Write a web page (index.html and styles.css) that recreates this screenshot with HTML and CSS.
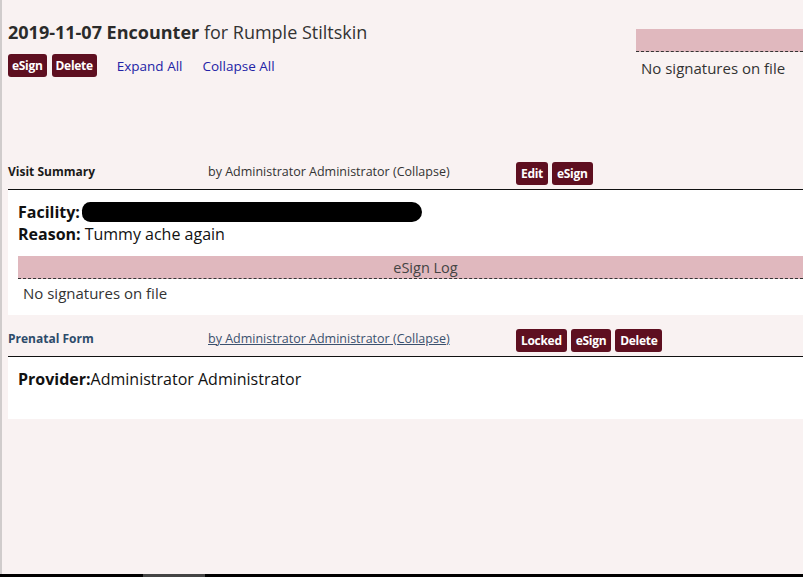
FILE: index.html
```html
<!DOCTYPE html>
<html lang="en">
<head>
  <meta charset="UTF-8">
  <title>Encounter</title>
  <link rel="stylesheet" href="styles.css">
</head>
<body>
  <div class="page">
    <header class="top">
      <div class="top-left">
        <h1><b>2019-11-07 Encounter</b> for Rumple Stiltskin</h1>
        <div class="actions">
          <a class="btn" href="#">eSign</a>
          <a class="btn" href="#">Delete</a>
          <a class="link" href="#">Expand All</a>
          <a class="link" href="#">Collapse All</a>
        </div>
      </div>
      <div class="top-log">
        <div class="log-bar"></div>
        <div class="log-empty">No signatures on file</div>
      </div>
    </header>

    <!-- visit summary -->
    <section class="form">
      <div class="form-head">
        <span class="form-title">Visit Summary</span>
        <span class="form-by">by Administrator Administrator (Collapse)</span>
        <span class="form-btns">
          <a class="btn" href="#">Edit</a>
          <a class="btn" href="#">eSign</a>
        </span>
      </div>
      <div class="form-body tall">
        <div class="field"><b>Facility:</b><span class="redact"></span></div>
        <div class="field"><b>Reason:</b> Tummy ache again</div>
        <div class="log">
          <div class="log-bar">eSign Log</div>
          <div class="log-empty small">No signatures on file</div>
        </div>
      </div>
    </section>

    <!-- prenatal form -->
    <section class="form">
      <div class="form-head">
        <span class="form-title blue">Prenatal Form</span>
        <a class="form-by under" href="#">by Administrator Administrator (Collapse)</a>
        <span class="form-btns">
          <a class="btn" href="#">Locked</a>
          <a class="btn" href="#">eSign</a>
          <a class="btn" href="#">Delete</a>
        </span>
      </div>
      <div class="form-body short">
        <div class="field"><b>Provider:</b>Administrator Administrator</div>
      </div>
    </section>
  </div>
  <div class="scrollbar"><span class="thumb"></span></div>
</body>
</html>
```

FILE: styles.css
```css
:root{
  --bg:#f9f2f2;
  --maroon:#5e0f20;
  --pink:#e0b8be;
  --text:#333;
}
*{box-sizing:border-box;margin:0;padding:0}
html,body{height:100%}
body{
  background:var(--bg);font-family:'Open Sans',sans-serif;color:var(--text);
  display:flex;flex-direction:column;overflow:hidden;
}
.page{flex:1;border-left:2px solid #d0cccc;padding:18px 0 0 6px}

/* top */
.top{display:flex;justify-content:space-between;height:140px}
.top-left{padding-top:1px}
h1{font-size:18px;font-weight:400;line-height:26px;color:#333}
h1 b{font-weight:700;color:#2b2b2b}
.actions{display:flex;align-items:center;gap:5px;margin-top:9px}
.btn{display:inline-block;background:var(--maroon);color:#fff;font-weight:700;font-size:12px;letter-spacing:-.3px;line-height:23px;padding:0 4px;border-radius:3px;text-decoration:none}
.link{color:#2323a6;text-decoration:none;font-size:13.5px;margin-left:15px}
.link + .link{margin-left:15px}
.top-log{width:167px;margin-top:11px}
.log-bar{background:var(--pink);height:23px;border-bottom:1px dashed #333;font-size:14.5px;line-height:24px;color:#444;text-align:center}
.log-empty{font-size:15px;color:#333;padding:6px 0 0 5px}

/* forms */
.form-head{display:grid;grid-template-columns:200px 308px auto;align-items:center;height:32px;border-bottom:1px solid #111;padding-bottom:1px}
.form-title,.form-by{padding-bottom:4px}
.form-title{font-size:12px;font-weight:700;color:#1a1a1a}
.form-title.blue{color:#2d4b6a}
.form-by{font-size:12.5px;color:#333}
.form-by.under{color:#3b516e;text-decoration:underline}
.form-btns{display:flex;gap:4px}
.form-btns .btn{padding:0 5px}
.form-body{background:#fff;padding:11px 0 0 10px}
.form-body.tall{height:125px}
.form-body.short{height:62px}
.form + .form{margin-top:10px}
.field{font-size:16px;line-height:22px;color:#111;display:flex;align-items:center}
.field b{font-weight:700;margin-right:4px}
.field:last-of-type b{margin-right:0}
.field b + .redact{margin-left:-2px}
.redact{display:inline-block;width:340px;height:20px;background:#000;border-radius:10px 12px 12px 10px}
.log{margin-top:11px}
.log .log-bar{padding-left:30px}
.log-empty.small{font-size:15px;padding:4px 0 0 5px;color:#333}

.scrollbar{height:3px;background:#000;flex:none;position:relative}
.thumb{position:absolute;left:143px;top:0;width:62px;height:3px;background:#444}
```
